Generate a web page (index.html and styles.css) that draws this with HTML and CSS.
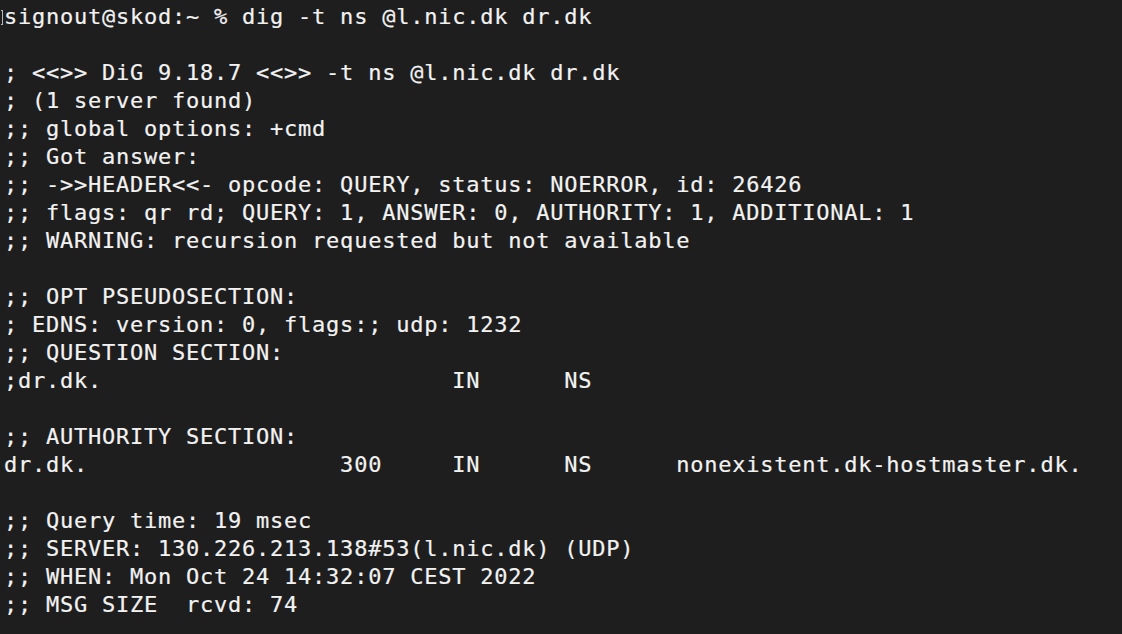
FILE: index.html
```html
<!DOCTYPE html>
<html>
<head>
<meta charset="utf-8">
<link rel="stylesheet" href="styles.css">
</head>
<body>
<pre class="term"><span class="edge"></span>signout@skod:~ % dig -t ns @l.nic.dk dr.dk

; &lt;&lt;&gt;&gt; DiG 9.18.7 &lt;&lt;&gt;&gt; -t ns @l.nic.dk dr.dk
; (1 server found)
;; global options: +cmd
;; Got answer:
;; -&gt;&gt;HEADER&lt;&lt;- opcode: QUERY, status: NOERROR, id: 26426
;; flags: qr rd; QUERY: 1, ANSWER: 0, AUTHORITY: 1, ADDITIONAL: 1
;; WARNING: recursion requested but not available

;; OPT PSEUDOSECTION:
; EDNS: version: 0, flags:; udp: 1232
;; QUESTION SECTION:
;dr.dk.                         IN      NS

;; AUTHORITY SECTION:
dr.dk.                  300     IN      NS      nonexistent.dk-hostmaster.dk.

;; Query time: 19 msec
;; SERVER: 130.226.213.138#53(l.nic.dk) (UDP)
;; WHEN: Mon Oct 24 14:32:07 CEST 2022
;; MSG SIZE  rcvd: 74
</pre>
</body>
</html>
```
FILE: styles.css
```css
html, body {
  margin: 0;
  padding: 0;
  background: #1e1e1e;
  overflow: hidden;
}
body {
  width: 1122px;
  height: 634px;
}
.term {
  margin: 0;
  padding: 3px 0 0 4px;
  font-family: "DejaVu Sans Mono", "Liberation Mono", monospace;
  font-size: 22px;
  letter-spacing: 0.76px;
  line-height: 28px;
  color: #f2f2f2;
  -webkit-text-stroke: 0.2px #f2f2f2;
  white-space: pre;
}
.edge {
  display: inline-block;
  width: 2px;
  height: 15px;
  margin-left: -3px;
  margin-right: 1px;
  vertical-align: -1px;
  border: 1px solid #b8b8b8;
  border-left: none;
  box-sizing: border-box;
}
```
